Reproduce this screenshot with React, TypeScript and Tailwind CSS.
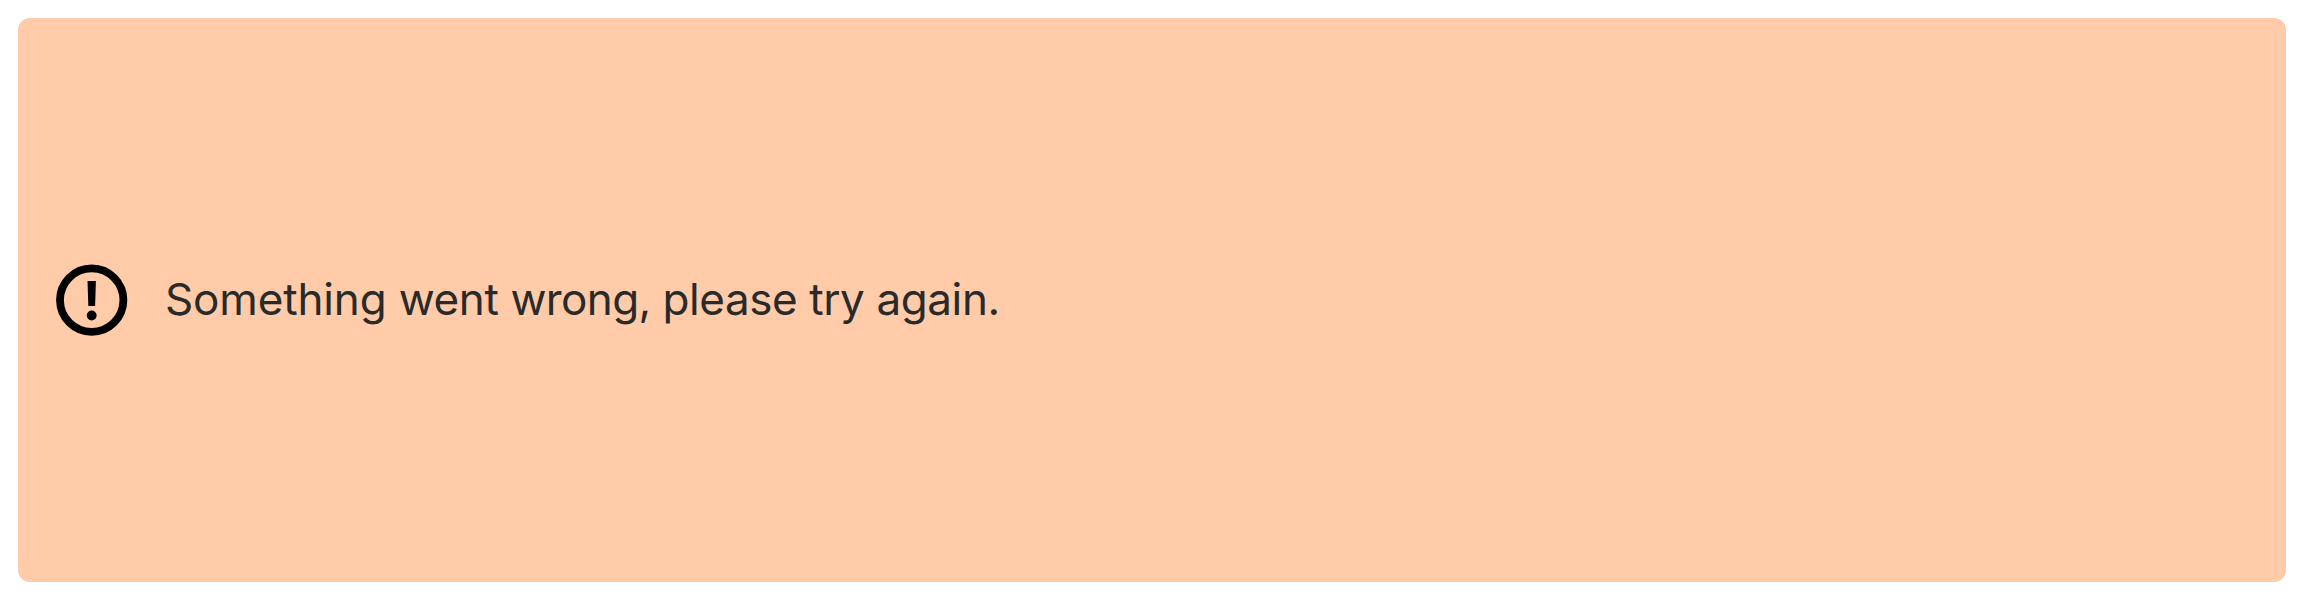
export default function App() {
  return (
    <main className="h-screen bg-white p-[18px]">
      <div role="alert" className="flex h-full items-center gap-[37px] rounded-[12px] bg-[#ffcba9] px-[38px]">
        <svg viewBox="0 0 72 72" className="size-[72px] shrink-0" fill="none" aria-hidden="true">
          <circle cx="35.7" cy="36.1" r="31.7" stroke="#000" strokeWidth="7.8" />
          <path d="M31.5 17h8.4l-.8 25h-6.8z" fill="#000" />
          <circle cx="35.7" cy="51.5" r="4.9" fill="#000" />
        </svg>
        <p className="-mt-0.5 font-[Inter,sans-serif] text-[44px] tracking-[-0.4px] text-[#292a2a]">
          <span className="tracking-[-0.15px]">Something </span>went <span className="tracking-[-0.6px]">wrong, </span>please try again.
        </p>
      </div>
    </main>
  );
}
